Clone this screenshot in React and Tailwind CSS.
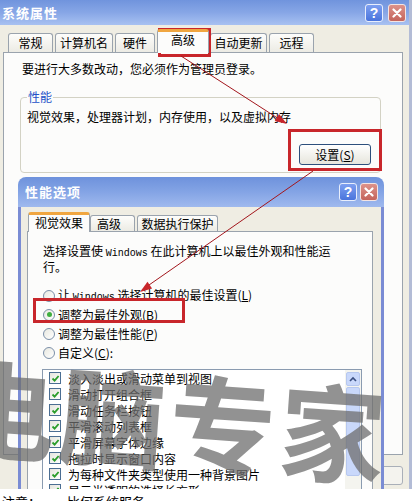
import React from "react";

function HelpBtn() {
  return (
    <div className="w-[18px] h-[18px] rounded-[3px] border border-[#e8eefc] bg-gradient-to-b from-[#7d9ff0] to-[#4a74dc] flex items-center justify-center">
      <span className="text-white font-bold text-[14px] leading-none font-['Liberation_Sans',sans-serif]">?</span>
    </div>
  );
}

function CloseBtn() {
  return (
    <div className="w-[18px] h-[18px] rounded-[3px] border border-[#f4e4e2] bg-gradient-to-b from-[#dd928a] to-[#c4645c] flex items-center justify-center">
      <svg width="10" height="10" viewBox="0 0 10 10">
        <path d="M1.5 1.5 L8.5 8.5 M8.5 1.5 L1.5 8.5" stroke="white" strokeWidth="2.2" strokeLinecap="round" />
      </svg>
    </div>
  );
}

function Tab({ label, w, selected, ml = 0 }) {
  if (selected) {
    return (
      <div
        className="relative z-10 h-[24px] -mb-px bg-[#fcfcfb] border border-b-0 border-[#9aa3ad] rounded-t-[3px] border-t-[3px] border-t-[#f0a640] flex items-start justify-center pt-[1px]"
        style={{ width: w, marginLeft: ml }}
      >
        {label}
      </div>
    );
  }
  return (
    <div
      className="h-[19px] bg-gradient-to-b from-[#fdfdfb] to-[#ecebe4] border border-b-0 border-[#9aa3ad] rounded-t-[3px] flex items-center justify-center"
      style={{ width: w, marginLeft: ml }}
    >
      {label}
    </div>
  );
}

function Radio({ checked }) {
  return (
    <div className="w-[12px] h-[12px] rounded-full border border-[#7b8fa8] bg-gradient-to-br from-[#e8e8e0] to-white flex items-center justify-center shrink-0">
      {checked && <div className="w-[5px] h-[5px] rounded-full bg-[#3fae3f]" />}
    </div>
  );
}

function Check() {
  return (
    <div className="w-[12px] h-[12px] border border-[#4b6e93] bg-gradient-to-br from-[#e4e4dc] to-white flex items-center justify-center shrink-0">
      <svg width="9" height="9" viewBox="0 0 9 9">
        <path d="M1.5 4.5 L3.6 6.6 L7.6 2" stroke="#2a9d2a" strokeWidth="1.8" fill="none" />
      </svg>
    </div>
  );
}

const items = [
  "淡入淡出或滑动菜单到视图",
  "滑动打开组合框",
  "滑动任务栏按钮",
  "平滑滚动列表框",
  "平滑屏幕字体边缘",
  "拖拉时显示窗口内容",
  "为每种文件夹类型使用一种背景图片",
  "显示半透明的选择长方形",
];

export default function App() {
  return (
    <div className="w-[415px] h-[501px] overflow-hidden bg-white text-[12px] leading-[14px] text-black font-['Noto_Sans_CJK_SC',sans-serif]">
      <div className="relative w-[415px] h-[489px] overflow-hidden">
        {/* Outer window */}
        <div className="w-[412px] h-[489px] flex flex-col bg-[#efede3] border-r-[3px] border-[#b3bcd6]">
          <div className="h-[25px] shrink-0 flex items-center justify-between pl-[2px] pr-[3px] bg-gradient-to-b from-[#7094dd] via-[#87a6e6] to-[#a8c1f1]">
            <span className="text-white font-bold text-[13px] tracking-[1px]">系统属性</span>
            <div className="flex gap-[5px]">
              <HelpBtn />
              <CloseBtn />
            </div>
          </div>
          <div className="h-[27px] shrink-0 flex items-end pl-[8px]">
            <Tab label="常规" w={45} />
            <Tab label="计算机名" w={58} ml={2} />
            <Tab label="硬件" w={40} ml={2} />
            <Tab label="高级" w={52} ml={2} selected />
            <Tab label="自动更新" w={57} ml={1} />
            <Tab label="远程" w={45} ml={2} />
          </div>
          <div className="ml-[3px] w-[400px] h-[403px] shrink-0 bg-[#fcfcfb] border border-[#9aa3ad] px-[16px] pt-[9px]">
            <div className="pl-[2px]">要进行大多数改动，您必须作为管理员登录。</div>
            <fieldset className="w-[361px] mt-[14px] border border-[#d3d2c4] rounded-[4px] px-[6px] pb-[7px]">
              <legend className="px-[1px] text-[#2350c8]">性能</legend>
              <div className="mt-[6px]">视觉效果，处理器计划，内存使用，以及虚拟内存</div>
              <div className="mt-[20px] flex justify-end pr-[3px]">
                <div className="w-[72px] h-[21px] rounded-[3px] border border-[#2d4f7c] bg-gradient-to-b from-white to-[#e6e5dc] flex items-center justify-center">
                  设置(<span className="underline">S</span>)
                </div>
              </div>
            </fieldset>
          </div>
          <div className="flex justify-end pr-[6px] mt-[11px]">
            <div className="w-[75px] h-[19px] rounded-[3px] border border-[#a9afb8] bg-[#f4f3ee]" />
          </div>
        </div>

        {/* Second window: 性能选项 */}
        <div className="absolute left-[18px] top-[177px] w-[366px] h-[330px] flex flex-col">
          <div className="h-[30px] shrink-0 rounded-t-[8px] flex items-center justify-between pl-[7px] pr-[6px] bg-gradient-to-b from-[#6e92dc] via-[#84a4e5] to-[#9fb9ee]">
            <span className="text-white font-bold text-[13px] tracking-[1px]">性能选项</span>
            <div className="flex gap-[3px]">
              <HelpBtn />
              <CloseBtn />
            </div>
          </div>
          <div className="flex-1 bg-[#efede3] border-x-[3px] border-[#7a8cd4] flex flex-col">
            <div className="h-[24px] shrink-0 flex items-end pl-[7px]">
              <div className="relative z-10 w-[62px] h-[20px] -mb-px bg-[#fcfcfb] border border-b-0 border-[#9aa3ad] rounded-t-[3px] border-t-[3px] border-t-[#f0a640] flex items-start justify-center pt-[1px]">
                视觉效果
              </div>
              <div className="w-[45px] h-[16px] bg-gradient-to-b from-[#fdfdfb] to-[#ecebe4] border border-b-0 border-[#9aa3ad] rounded-t-[3px] flex items-center pl-[6px]">
                高级
              </div>
              <div className="ml-[2px] w-[81px] h-[16px] bg-gradient-to-b from-[#fdfdfb] to-[#ecebe4] border border-b-0 border-[#9aa3ad] rounded-t-[3px] flex items-center justify-center">
                数据执行保护
              </div>
            </div>
            <div className="ml-[6px] w-[346px] flex-1 bg-[#fcfcfb] border border-[#9aa3ad] pl-[15px] pt-[12px] leading-[13px]">
              <div>
                选择设置使 <span className="font-['Liberation_Mono',monospace] text-[10px]">Windows</span> 在此计算机上以最佳外观和性能运
                <br />
                行。
              </div>
              <div className="mt-[13px] flex flex-col">
                <div className="h-[19px] flex items-center gap-[3px]">
                  <Radio />
                  <span>
                    让 <span className="font-['Liberation_Mono',monospace] text-[10px]">Windows</span> 选择计算机的最佳设置(<span className="underline">L</span>)
                  </span>
                </div>
                <div className="h-[19px] flex items-center gap-[3px]">
                  <Radio checked />
                  <span>调整为最佳外观(<span className="underline">B</span>)</span>
                </div>
                <div className="h-[19px] flex items-center gap-[3px]">
                  <Radio />
                  <span>调整为最佳性能(<span className="underline">P</span>)</span>
                </div>
                <div className="h-[19px] flex items-center gap-[3px]">
                  <Radio />
                  <span>自定义(<span className="underline">C</span>):</span>
                </div>
              </div>
              <div className="mt-[7px] -ml-[1px] w-[320px] h-[140px] border border-[#8a9bb0] bg-white flex">
                <div className="flex-1 flex flex-col pl-[6px]">
                  {items.map((t) => (
                    <div key={t} className="h-[16px] flex items-center gap-[7px]">
                      <Check />
                      <span>{t}</span>
                    </div>
                  ))}
                </div>
                <div className="w-[16px] bg-[#f4f4ef] flex flex-col items-center pt-[2px]">
                  <div className="w-[14px] h-[14px] rounded-[2px] border border-[#b7c8ef] bg-[#c9d8fb] flex items-center justify-center">
                    <svg width="8" height="6" viewBox="0 0 8 6">
                      <path d="M1 5 L4 2 L7 5" stroke="#3b4f81" strokeWidth="1.6" fill="none" />
                    </svg>
                  </div>
                  <div className="mt-[1px] w-[14px] h-[89px] rounded-[2px] border border-[#b7c8ef] bg-[#c9d8fb]" />
                </div>
              </div>
            </div>
          </div>
        </div>

        {/* Red annotation boxes */}
        <div className="absolute left-[158px] top-[28px] w-[53px] h-[29px] border-[3px] border-[#c8262b]" />
        <div className="absolute left-[288px] top-[129px] w-[94px] h-[42px] border-[3px] border-[#c8262b]" />
        <div className="absolute left-[33px] top-[298px] w-[152px] h-[25px] border-[3px] border-[#c8262b]" />

        {/* Arrows */}
        <svg className="absolute left-0 top-0 pointer-events-none" width="415" height="489">
          <line x1="181" y1="56" x2="279" y2="119" stroke="#a3161c" strokeWidth="1" />
          <polygon points="287,124 274.7,120.9 279.1,114.1" fill="#c8262b" />
          <line x1="313" y1="171" x2="149" y2="285" stroke="#a3161c" strokeWidth="1" />
          <polygon points="140,292 147.5,281.8 152.1,288.4" fill="#c8262b" />
        </svg>

        {/* Watermark */}
        <div className="absolute -left-[50px] top-[354px] flex text-[106px] leading-[126px] font-bold text-[#6e6e6e]/75 tracking-[4px] rotate-[4deg] pointer-events-none whitespace-nowrap">
          电脑专家
        </div>
      </div>
      <div className="pl-[2px] pt-[5px] text-[13px] leading-[16px]">注意：一、比何系统服务</div>
    </div>
  );
}
